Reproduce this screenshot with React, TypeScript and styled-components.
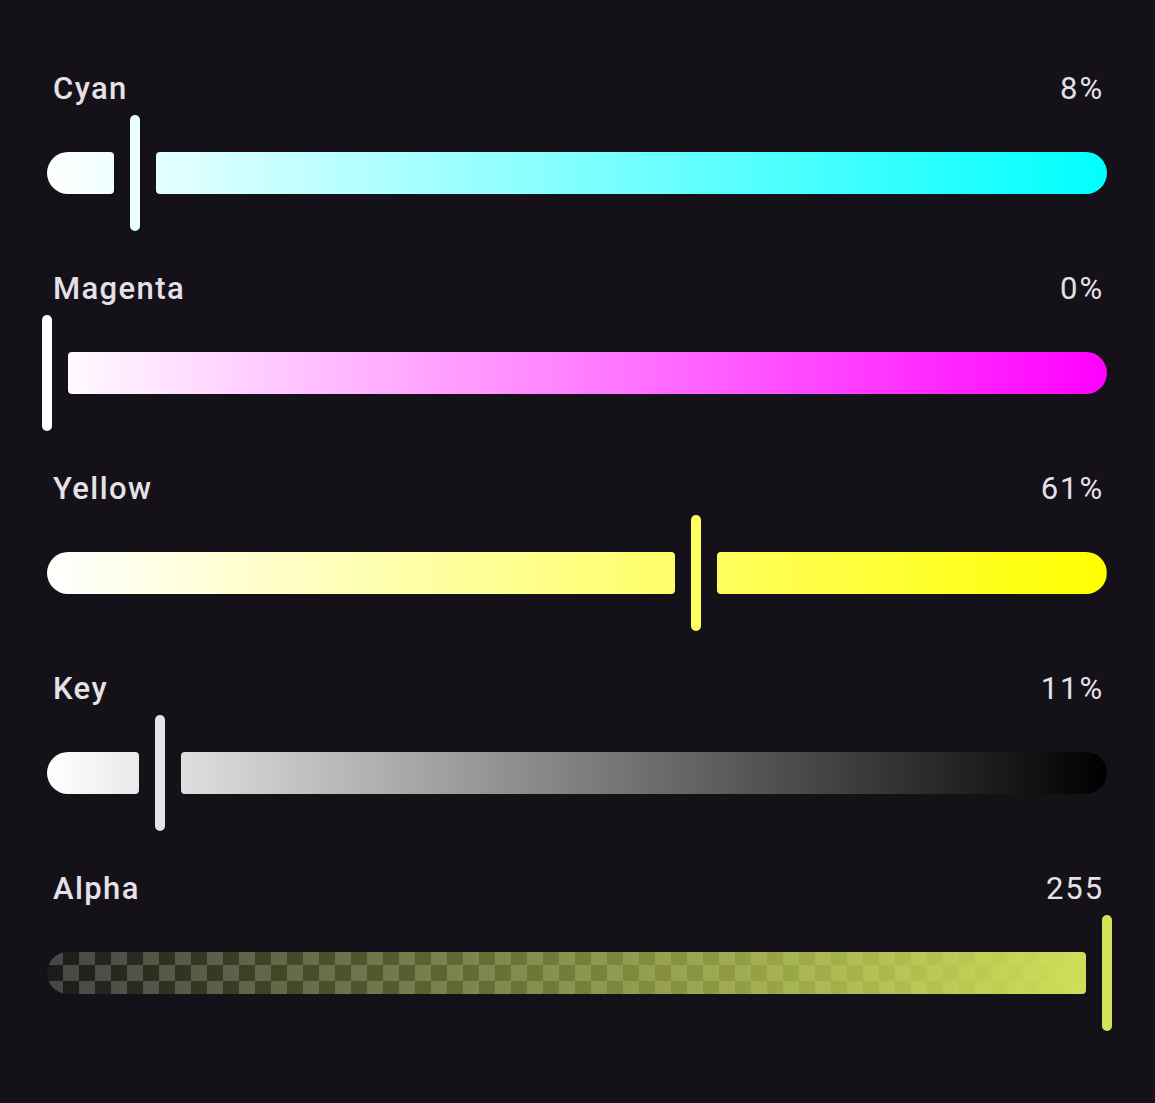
import React from "react";
import styled, { createGlobalStyle } from "styled-components";

const TRACK_W = 1060;
const GAP = 21;
const MIX = "209, 227, 89";

type Channel = {
  name: string;
  value: string;
  pos: number;
  from: [number, number, number];
  to: [number, number, number];
  alpha?: boolean;
};

const CHANNELS: Channel[] = [
  { name: "Cyan", value: "8%", pos: 0.083, from: [255, 255, 255], to: [0, 255, 255] },
  { name: "Magenta", value: "0%", pos: 0, from: [255, 255, 255], to: [255, 0, 255] },
  { name: "Yellow", value: "61%", pos: 0.6125, from: [255, 255, 255], to: [255, 255, 0] },
  { name: "Key", value: "11%", pos: 0.107, from: [255, 255, 255], to: [0, 0, 0] },
  { name: "Alpha", value: "255", pos: 1, from: [209, 227, 89], to: [209, 227, 89], alpha: true },
];

const GlobalStyle = createGlobalStyle`
  html, body {
    margin: 0;
    background: #141218;
  }
  body {
    font-family: Roboto, "Noto Sans", sans-serif;
    -webkit-font-smoothing: antialiased;
  }
`;

const Page = styled.main`
  min-height: 1103px;
  box-sizing: border-box;
  padding: 68px 48px 0 47px;
  display: flex;
  flex-direction: column;
  gap: 37px;
`;

const Row = styled.section`
  display: flex;
  flex-direction: column;
  gap: 7px;
`;

const Header = styled.div`
  display: flex;
  justify-content: space-between;
  align-items: center;
  height: 40px;
  padding: 0 5px 0 6px;
  color: #e6e0e9;
`;

const Label = styled.span`
  font-size: 31px;
  font-weight: 500;
  letter-spacing: 1.4px;
`;

const Value = styled.span`
  font-size: 31px;
  font-weight: 400;
  letter-spacing: 1.9px;
  margin-right: -2px;
`;

const Slider = styled.div`
  position: relative;
  width: ${TRACK_W}px;
  height: 116px;
  display: flex;
  align-items: center;
`;

const Segment = styled.div<{ $side: "start" | "end"; $alpha?: boolean }>`
  height: 42px;
  flex: ${(p) => (p.$side === "end" ? "1" : "none")};
  border-radius: ${(p) => (p.$side === "start" ? "21px 4px 4px 21px" : "4px 21px 21px 4px")};
  background-repeat: ${(p) => (p.$alpha ? "no-repeat, repeat" : "no-repeat")};
`;

const Thumb = styled.div`
  position: absolute;
  top: 0;
  width: 10px;
  height: 116px;
  border-radius: 5px;
`;

const mixColor = (a: number[], b: number[], t: number) =>
  `rgb(${a.map((v, i) => Math.round(v + (b[i] - v) * t)).join(", ")})`;

const checker =
  "conic-gradient(#1a1a1a 25%, #464646 0 50%, #1a1a1a 0 75%, #464646 0)";

function ChannelSlider({ ch }: { ch: Channel }) {
  const c = ch.pos * TRACK_W;
  const leftW = Math.max(0, c - GAP);
  const rightStart = c + GAP;
  const grad = ch.alpha
    ? `linear-gradient(to right, rgba(${MIX}, 0), rgb(${MIX}))`
    : `linear-gradient(to right, ${mixColor(ch.from, ch.from, 0)}, ${mixColor(ch.from, ch.to, 1)})`;

  const bg = (offset: number) =>
    ch.alpha
      ? {
          backgroundImage: `${grad}, ${checker}`,
          backgroundSize: `${TRACK_W}px 100%, 32px 32px`,
          backgroundPosition: `${-offset}px 0, ${-offset}px -3px`,
        }
      : {
          backgroundImage: grad,
          backgroundSize: `${TRACK_W}px 100%`,
          backgroundPosition: `${-offset}px 0`,
        };

  const thumbColor = ch.alpha ? `rgb(${MIX})` : mixColor(ch.from, ch.to, ch.pos);

  return (
    <Slider>
      {leftW > 0 && <Segment $side="start" $alpha={ch.alpha} style={{ width: leftW, ...bg(0) }} />}
      {rightStart < TRACK_W && (
        <Segment
          $side="end"
          $alpha={ch.alpha}
          style={{ marginLeft: rightStart - leftW, ...bg(rightStart) }}
        />
      )}
      <Thumb style={{ left: c - 5, background: thumbColor }} />
    </Slider>
  );
}

export default function App() {
  return (
    <>
      <GlobalStyle />
      <Page>
        {CHANNELS.map((ch) => (
          <Row key={ch.name}>
            <Header>
              <Label>{ch.name}</Label>
              <Value>{ch.value}</Value>
            </Header>
            <ChannelSlider ch={ch} />
          </Row>
        ))}
      </Page>
    </>
  );
}
